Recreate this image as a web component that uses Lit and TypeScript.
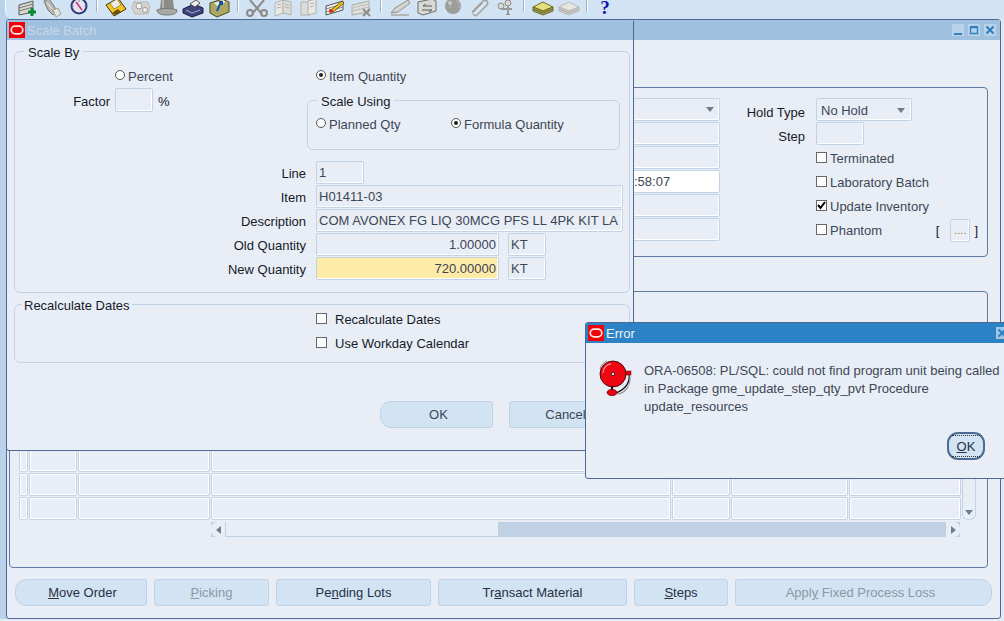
import { LitElement, html, svg, css } from "lit";
import { customElement } from "lit/decorators.js";

const oracleLogo = html`<svg class="logo" viewBox="0 0 16 16">
	<rect width="16" height="16" fill="#f40009" />
	<rect x="2.2" y="4.2" width="11.6" height="7.6" rx="3.8" fill="none" stroke="#fff" stroke-width="1.7" opacity="0.9" />
</svg>`;

// toolbar glyphs, all drawn in a 26x20 box and cut off by the top of the page
const icons: Record<string, unknown> = {
	add: svg`<path d="M5 5l14-4v11L5 15z" fill="#d8d8d0" stroke="#5a5a55" />
		<path d="M5 8l14-4M5 11l14-4" stroke="#77776f" />
		<path d="M14 12h8M18 8v8" stroke="#0a8a30" stroke-width="3" />`,
	lamp: svg`<path d="M4 1l5-2 5 7 3 6-4 3-5-5z" fill="#b9b9b5" stroke="#77776f" />
		<path d="M13 10l5-2 3 6-5 3z" fill="#e4e4de" stroke="#a0a09a" />
		<path d="M7 3l5 6" stroke="#eee" />`,
	compass: svg`<circle cx="13" cy="6" r="7.5" fill="#e4e4ee" stroke="#2f3a78" stroke-width="2" />
		<path d="M10 2l6 8" stroke="#d0307a" stroke-width="1.5" />
		<path d="M13 0v2M20 6h-2M6 6h2" stroke="#8a8aa8" />`,
	save: svg`<path d="M4 5L16 -2l8 11-12 7z" fill="#f4c41e" stroke="#3f3408" />
		<path d="M8 3l7-4 4 6-7 4z" fill="#ecece4" stroke="#6a5a10" stroke-width="0.6" />
		<path d="M10 13l6-4 3 3-6 3z" fill="#6a5208" />`,
	gear: svg`<path d="M6 2h14l2 5-2 7H7l-3-6z" fill="#d4d4d0" stroke="#a8a8a4" stroke-dasharray="2 1" />
		<circle cx="11" cy="6" r="3" fill="#f2f2ee" stroke="#9a9a96" />
		<circle cx="17" cy="10" r="2.5" fill="#f2f2ee" stroke="#9a9a96" />`,
	hat: svg`<path d="M7 0h12l1 9H6z" fill="#8b8b87" />
		<path d="M3 10c4-2 16-2 20 0 0 3-3 5-10 5S3 13 3 10z" fill="#a9a9a5" stroke="#77776f" />
		<path d="M9 0v8" stroke="#b5b5b0" stroke-width="2" />`,
	printer: svg`<path d="M3 9l11-5 9 4v5l-11 4-9-4z" fill="#3d4478" stroke="#1c1f48" />
		<path d="M10 4l6-4 4 3-5 4z" fill="#f0f0f4" stroke="#555" />
		<path d="M6 10l6 3 8-3" stroke="#a7acd6" fill="none" />`,
	folder: svg`<path d="M4 3l12-4 7 3v10l-12 5-7-4z" fill="#aca862" stroke="#4c4a24" />
		<path d="M8 3l9-3 3 2-9 4z" fill="#e6e6d6" />
		<path d="M11 11l4-9M13 2h3v3" stroke="#1450b4" stroke-width="2" fill="none" />`,
	cut: svg`<path d="M6 0l12 14M20 0L8 14" stroke="#8a8a86" stroke-width="2" />
		<circle cx="6" cy="13" r="3" fill="none" stroke="#8a8a86" stroke-width="2" />
		<circle cx="20" cy="13" r="3" fill="none" stroke="#8a8a86" stroke-width="2" />`,
	copy: svg`<path d="M5 3l8-3v13l-8 3z" fill="#e8e8e4" stroke="#b4b4b0" />
		<path d="M13 0l8 2v13l-8-2z" fill="#dcdcd8" stroke="#b4b4b0" />
		<path d="M7 5l4-1M7 8l4-1M15 4l4 1M15 7l4 1" stroke="#b4b4b0" />`,
	paste: svg`<path d="M5 2h9v13H5z" fill="#dcdcd8" stroke="#b0b0ac" />
		<path d="M12 1l8-2v14l-8 2z" fill="#e8e8e4" stroke="#b0b0ac" />
		<path d="M14 4l4-1M14 7l4-1" stroke="#b4b4b0" />`,
	edit: svg`<path d="M4 6l17-5v9L4 15z" fill="#ecece6" stroke="#55554f" />
		<path d="M4 9l17-5M4 12l17-5" stroke="#88887f" />
		<path d="M9 10l11-9 2 2-11 9z" fill="#f2c11d" stroke="#6a5a10" />
		<circle cx="9" cy="11" r="2" fill="#d22" />`,
	clear: svg`<path d="M4 5l17-4v11L4 15z" fill="#dededa" stroke="#aaaaa6" />
		<path d="M4 8l17-4M4 11l17-4" stroke="#bcbcb8" />
		<path d="M15 9l7 7M22 9l-7 7" stroke="#8e8e8a" stroke-width="2" />`,
	pen: svg`<path d="M3 13l4-5L20 0l2 3L10 12z" fill="#d4d4d0" stroke="#8f8f8b" />
		<path d="M3 15h18" stroke="#a8a8a4" stroke-width="1.5" />`,
	translate: svg`<path d="M4 2l14-3 4 2v10L9 15l-5-2z" fill="#d8d8d4" stroke="#6e6e6a" />
		<path d="M9 6h9M9 6l3-2M18 10H8M18 10l-3 2" stroke="#5c5c58" fill="none" />`,
	globe: svg`<circle cx="13" cy="6" r="8" fill="#9c9c98" />
		<path d="M7 1c3 1 4 4 3 7M15 -1c3 3 5 6 4 9" stroke="#b8b8b4" fill="none" />
		<circle cx="10" cy="3" r="2" fill="#c8c8c4" />`,
	clip: svg`<path d="M6 12L17 1c3-2 6 1 4 4L11 15c-2 2-5-1-3-3l9-9" fill="none" stroke="#a4a4a0" stroke-width="1.6" />
		<path d="M7 14L18 3" stroke="#f4f4f4" />`,
	tree: svg`<circle cx="9" cy="6" r="3" fill="#d8d8d4" stroke="#8c8c88" />
		<circle cx="16" cy="3" r="3" fill="#d8d8d4" stroke="#8c8c88" />
		<path d="M9 9h7M16 6v9M12 9h8" stroke="#9a9a96" stroke-width="2" />
		<path d="M14 14h4v1h-4z" fill="#8c8c88" />`,
	stack: svg`<path d="M3 7l10-5 10 5-10 4z" fill="#e6e07c" stroke="#6c6a2c" />
		<path d="M3 7v4l10 4 10-4V7l-10 4z" fill="#a8a24c" stroke="#6c6a2c" />
		<path d="M3 9l10 4 10-4" stroke="#6c6a2c" fill="none" />`,
	stackOff: svg`<path d="M3 7l10-5 10 5-10 4z" fill="#e6e6e2" stroke="#b8b8b4" />
		<path d="M3 7v4l10 4 10-4V7l-10 4z" fill="#cbcbc7" stroke="#b8b8b4" />
		<path d="M3 9l10 4 10-4" stroke="#b0b0ac" fill="none" />`,
};

const toolIcon = (name: string) => html`<svg class="tool" viewBox="0 0 26 20">${icons[name]}</svg>`;

const bell = html`<svg class="bell" viewBox="0 0 36 37">
	<path d="M2 9C3 5 6 2 9 1M30 27c-2 4-6 7-11 7" fill="none" stroke="#8a8a8a" />
	<path d="M29 14h2c1 7-1 14-13 19" fill="none" stroke="#111" stroke-width="1.2" />
	<path d="M32 16c1 6-1 13-11 18" fill="none" stroke="#999" />
	<path d="M14 26v6" stroke="#111" stroke-width="2" />
	<rect x="27" y="11" width="6" height="4" fill="#e8000e" stroke="#700" stroke-width="0.5" />
	<ellipse cx="14" cy="32.5" rx="5" ry="3.2" fill="#e8000e" stroke="#400" stroke-width="0.6" />
	<circle cx="15" cy="14" r="13" fill="#ee0612" stroke="#200" stroke-width="0.8" />
	<path d="M5 13C5 8 9 4 13 4" fill="none" stroke="#ff8a90" stroke-width="1.4" />
	<circle cx="15" cy="14" r="1.6" fill="#fff" stroke="#111" stroke-width="0.8" />
</svg>`;

const arrow = (dir: string) => html`<i class="arrow ${dir}"></i>`;

@customElement("app-root")
export class AppRoot extends LitElement {
	static styles = css`
		:host {
			display: block;
			position: relative;
			width: 1004px;
			height: 621px;
			overflow: hidden;
			background:
				linear-gradient(to top, #e4ecf5 2px, transparent 2px),
				linear-gradient(to right, #b9d1e9 990px, #dfe9f4 990px);
			font: 13px/1 "Liberation Sans", Arial, sans-serif;
			color: #141a28;
		}
		* {
			box-sizing: border-box;
		}

		/* toolbar */
		.toolbar {
			display: flex;
			align-items: flex-start;
			height: 19px;
			margin-left: 5px;
			padding-left: 8px;
			background: #d2e3f3;
			border-left: 1px solid #f4f8fc;
			border-bottom-left-radius: 8px;
		}
		.tool {
			flex: none;
			display: block;
			width: 26px;
			height: 20px;
		}
		.sep {
			flex: none;
			height: 12px;
			border-left: 1px solid #a2b2c4;
			border-right: 1px solid #fff;
			margin: 0 4px;
			width: 2px;
		}
		.sep.wide {
			margin: 0 5px;
		}
		.sep.widest {
			margin: 0 6px;
		}
		.help {
			flex: none;
			width: 26px;
			text-align: center;
			font: bold 19px/15px "Liberation Serif", serif;
			color: #1414b8;
		}

		/* windows sit on a free desktop */
		.window {
			position: absolute;
			background: #e9eef6;
			border: 1px solid #4c6a94;
			border-radius: 3px;
		}
		.main {
			left: 6px;
			top: 19px;
			width: 995px;
			height: 600px;
		}
		.scale {
			left: 6px;
			top: 19px;
			width: 628px;
			height: 432px;
		}
		.error {
			left: 585px;
			top: 322px;
			width: 430px;
			height: 157px;
		}
		.title {
			display: flex;
			align-items: center;
			height: 20px;
			padding-left: 2px;
			background: #9fc0de;
			color: #c6d8ea;
		}
		.error .title {
			background: #2c82c4;
			color: #eef4fa;
		}
		.logo {
			flex: none;
			width: 16px;
			height: 16px;
			margin-right: 2px;
		}
		.controls {
			display: flex;
			gap: 4px;
			margin-left: auto;
			margin-right: 4px;
		}
		.error .controls {
			margin-right: 6px;
		}
		.ctl {
			display: block;
			width: 12px;
			height: 12px;
			background: #b7d3ea;
		}
		.error .ctl {
			background: #9cc7e8;
		}

		/* main window */
		.main-body {
			padding: 0 12px 0 2px;
		}
		.box {
			border: 1px solid #5e7a9f;
			border-radius: 4px;
		}
		.upper {
			margin-top: 47px;
			height: 170px;
			padding: 10px 0 0 615px;
			display: grid;
			grid-template-columns: 95px 96px 165px;
			grid-auto-rows: 24px;
		}
		.f {
			display: flex;
			align-items: center;
			height: 23px;
			padding: 0 2px;
			background: #e9eef6;
			border: 1px solid #c3d3e7;
			border-radius: 2px;
			box-shadow: inset -1px -1px 0 #fff;
			color: #3d4657;
			white-space: nowrap;
		}
		.f.white {
			background: #fff;
			padding-left: 8px;
		}
		.f.select {
			justify-content: space-between;
			padding: 1px 6px 0 4px;
			width: 96px;
		}
		.col-fld {
			justify-content: flex-end;
			padding-right: 5px;
		}
		.step {
			width: 48px;
		}
		.lbl {
			display: flex;
			align-items: center;
			justify-content: flex-end;
			height: 24px;
			padding-top: 1px;
			white-space: nowrap;
		}
		.upper .lbl {
			padding: 4px 11px 0 0;
		}
		.chk {
			display: flex;
			align-items: center;
			gap: 3px;
			height: 24px;
			color: #3d4657;
			white-space: nowrap;
		}
		.box-c {
			flex: none;
			width: 11px;
			height: 11px;
			background: #fff;
			border: 1px solid #666;
			margin-top: -2px;
			display: block;
		}
		.box-c svg {
			display: block;
		}
		.brackets {
			display: flex;
			align-items: center;
			margin-left: auto;
			margin-right: 3px;
			color: #141a28;
		}
		.brackets .f {
			width: 20px;
			margin: 0 4px 0 11px;
			padding: 0;
			justify-content: center;
			color: #a8782a;
			font-size: 11px;
		}
		.arrow {
			display: block;
			width: 0;
			height: 0;
			border: 4px solid transparent;
		}
		.arrow.down {
			border-top: 5px solid #6f7c92;
			border-bottom: 0;
		}
		.arrow.left {
			border-right: 5px solid #6f7c92;
			border-left: 0;
		}
		.arrow.right {
			border-left: 5px solid #6f7c92;
			border-right: 0;
		}

		.lower {
			margin-top: 34px;
			height: 277px;
			padding: 157px 0 0 9px;
		}
		.table {
			display: grid;
			grid-template-columns: 9px 48px 132px 460px 58px 117px 112px 14px;
			column-gap: 1px;
			grid-auto-rows: 23px;
			row-gap: 1px;
		}
		.cell {
			background: #e9eef6;
			border: 1px solid #c3d3e7;
			border-radius: 2px;
			box-shadow: inset -1px -1px 0 #fff, inset 1px 1px 0 #fff;
		}
		.vbar {
			grid-column: 8;
			grid-row: 1 / span 3;
			display: flex;
			flex-direction: column;
			justify-content: flex-end;
			align-items: center;
			padding-bottom: 4px;
			border: 1px solid #c3d3e7;
			border-top: 0;
			border-radius: 0 0 6px 6px;
			background: #e9eef6;
		}
		.hbar {
			display: flex;
			height: 15px;
			margin: 2px 0 0 192px;
			width: 749px;
			background: #c0d1e6;
		}
		.hbar .end {
			flex: none;
			width: 14px;
			display: flex;
			align-items: center;
			justify-content: center;
			background: #e9eef6;
			border-radius: 6px 0 0 6px;
		}
		.hbar .end.r {
			border-radius: 0 6px 6px 0;
		}
		.hbar .thumb {
			flex: none;
			width: 272px;
			margin: 0 0 1px 1px;
			background: #e9eef6;
		}
		.hbar .gap {
			flex: 1;
		}

		.actions {
			display: flex;
			gap: 7px;
			margin: 11px 0 0 6px;
		}
		.btn {
			display: flex;
			align-items: center;
			justify-content: center;
			flex: none;
			height: 27px;
			background: #d2e3f3;
			border: 1px solid #bfd2e7;
			border-radius: 3px;
			color: #283044;
			white-space: nowrap;
		}
		.btn.off {
			color: #8d97a5;
		}
		.btn.round-l {
			border-radius: 11px 3px 3px 11px;
		}
		.btn.round-r {
			border-radius: 3px 11px 11px 3px;
		}
		.w-move { width: 132px; padding-left: 3px; }
		.w-pick { width: 115px; }
		.w-pend { width: 155px; }
		.w-tran { width: 189px; }
		.w-step { width: 94px; }
		.w-appl { width: 257px; padding-right: 6px; }

		/* scale batch window */
		.scale-body {
			padding: 11px 3px 0 7px;
		}
		.group {
			position: relative;
			border: 1px solid #c3d3e7;
			border-radius: 6px;
		}
		.legend {
			position: absolute;
			top: -6px;
			background: #e9eef6;
			padding: 0 4px 1px 4px;
			line-height: 14px;
		}
		.scale-by {
			width: 616px;
			height: 242px;
			padding-top: 14px;
		}
		.scale-by > .legend {
			left: 9px;
		}
		.top {
			display: grid;
			grid-template-columns: 292px 313px;
			grid-template-rows: 20px 64px;
		}
		.opt {
			display: flex;
			align-items: center;
			gap: 3px;
			color: #3d4657;
			white-space: nowrap;
		}
		.opt.percent {
			padding-left: 100px;
		}
		.opt.item {
			padding-left: 9px;
		}
		.radio {
			flex: none;
			width: 10px;
			height: 10px;
			margin-top: -2px;
			border-radius: 50%;
			border: 1px solid #555;
			background: #fff;
			position: relative;
		}
		.radio.on::after {
			content: "";
			position: absolute;
			inset: 2px;
			border-radius: 50%;
			background: #222;
		}
		.factor {
			display: flex;
			align-items: center;
			height: 24px;
			margin-top: 2px;
		}
		.factor .lbl {
			width: 95px;
			padding-top: 2px;
		}
		.factor .f {
			width: 38px;
			margin: 0 5px;
			height: 24px;
		}
		.factor .pct {
			padding-top: 2px;
		}
		.using {
			margin-top: 14px;
			height: 50px;
			padding-top: 14px;
		}
		.using .legend {
			left: 9px;
		}
		.using-row {
			display: flex;
			padding-left: 8px;
			height: 18px;
		}
		.using-row .opt:first-child {
			width: 135px;
		}
		.rows {
			display: grid;
			grid-template-columns: 291px 1fr;
			grid-auto-rows: 24px;
			column-gap: 10px;
			margin-top: 11px;
		}
		.line { width: 48px; }
		.wide-f { width: 307px; }
		.qty {
			display: flex;
			gap: 9px;
		}
		.qty .f:first-child {
			width: 183px;
			justify-content: flex-end;
		}
		.qty .f:last-child {
			width: 38px;
		}
		.f.hot {
			background: #ffeba8;
		}
		.recalc {
			width: 616px;
			height: 59px;
			margin-top: 11px;
			padding: 2px 0 0 301px;
		}
		.recalc .legend {
			left: 7px;
			padding: 0 2px;
		}
		.recalc .chk {
			gap: 8px;
			color: #141a28;
		}
		.dlg-btns {
			display: flex;
			gap: 16px;
			margin: 38px 0 0 366px;
		}
		.dlg-btns .btn {
			width: 113px;
			color: #3d4657;
		}
		.dlg-btns .btn:first-child {
			padding-left: 4px;
		}

		/* error window */
		.err-body {
			display: flex;
			padding: 19px 0 0 12px;
		}
		.bell {
			flex: none;
			width: 36px;
			height: 37px;
			margin: -2px 10px 0 0;
		}
		.msg {
			line-height: 18px;
			color: #3d4657;
			white-space: nowrap;
		}
		.ack {
			display: flex;
			align-items: center;
			justify-content: center;
			width: 38px;
			height: 28px;
			margin: 16px 0 0 303px;
			background: #d2e3f3;
			border: 2px solid #4c6a94;
			border-radius: 11px;
			color: #283044;
			position: relative;
		}
		.ack::before {
			content: "";
			position: absolute;
			inset: 1px 3px;
			border-top: 1px dotted #333;
			border-bottom: 1px dotted #333;
		}
	`;

	render() {
		return html`
			<div class="toolbar">
				${toolIcon("add")}${toolIcon("lamp")}${toolIcon("compass")}
				<i class="sep"></i>
				${toolIcon("save")}${toolIcon("gear")}${toolIcon("hat")}${toolIcon("printer")}${toolIcon("folder")}
				<i class="sep wide"></i>
				${toolIcon("cut")}${toolIcon("copy")}${toolIcon("paste")}${toolIcon("edit")}${toolIcon("clear")}
				<i class="sep widest"></i>
				${toolIcon("pen")}${toolIcon("translate")}${toolIcon("globe")}${toolIcon("clip")}${toolIcon("tree")}
				<i class="sep wide"></i>
				${toolIcon("stack")}${toolIcon("stackOff")}
				<i class="sep"></i>
				<span class="help">?</span>
			</div>
			${this.renderMain()} ${this.renderScale()} ${this.renderError()}
		`;
	}

	renderControls(all: boolean) {
		return html`<div class="controls">
			${all
				? html`<svg class="ctl" viewBox="0 0 12 12"><path d="M2 10h8" stroke="#2f7fc1" stroke-width="2" /></svg>
						<svg class="ctl" viewBox="0 0 12 12"><path d="M2.5 3.5h7v6h-7z" fill="none" stroke="#2f7fc1" stroke-width="1.4" /><path d="M2 3h8" stroke="#2f7fc1" stroke-width="2" /></svg>`
				: ""}
			<svg class="ctl" viewBox="0 0 12 12"><path d="M2.5 2.5l7 7M9.5 2.5l-7 7" stroke="#2f7fc1" stroke-width="2" /></svg>
		</div>`;
	}

	renderMain() {
		const rows = [0, 1, 2];
		return html`
			<section class="window main">
				<div class="title">${this.renderControls(true)}</div>
				<div class="main-body">
					<div class="box upper">
						<div class="f col-fld">${arrow("down")}</div>
						<div class="lbl">Hold Type</div>
						<div class="f select">No Hold ${arrow("down")}</div>

						<div class="f"></div>
						<div class="lbl">Step</div>
						<div class="f step"></div>

						<div class="f"></div>
						<div></div>
						<label class="chk"><i class="box-c"></i>Terminated</label>

						<div class="f white">:58:07</div>
						<div></div>
						<label class="chk"><i class="box-c"></i>Laboratory Batch</label>

						<div class="f"></div>
						<div></div>
						<label class="chk">
							<i class="box-c"><svg viewBox="0 0 9 9"><path d="M1 4l2.5 3L8 1" fill="none" stroke="#000" stroke-width="2" /></svg></i>
							Update Inventory
						</label>

						<div class="f"></div>
						<div></div>
						<div class="chk">
							<i class="box-c"></i>Phantom
							<span class="brackets">[<span class="f">....</span>]</span>
						</div>
					</div>

					<div class="box lower">
						<div class="table">
							${rows.map(
								() => html`
									<div class="cell"></div>
									<div class="cell"></div>
									<div class="cell"></div>
									<div class="cell"></div>
									<div class="cell"></div>
									<div class="cell"></div>
									<div class="cell"></div>
								`,
							)}
							<div class="vbar">${arrow("down")}</div>
						</div>
						<div class="hbar">
							<span class="end">${arrow("left")}</span>
							<span class="thumb"></span>
							<span class="gap"></span>
							<span class="end r">${arrow("right")}</span>
						</div>
					</div>

					<div class="actions">
						<div class="btn round-l w-move"><span><u>M</u>ove Order</span></div>
						<div class="btn off w-pick"><span><u>P</u>icking</span></div>
						<div class="btn w-pend"><span>Pe<u>n</u>ding Lots</span></div>
						<div class="btn w-tran"><span>Tr<u>a</u>nsact Material</span></div>
						<div class="btn w-step"><span><u>S</u>teps</span></div>
						<div class="btn off round-r w-appl"><span>Appl<u>y</u> Fixed Process Loss</span></div>
					</div>
				</div>
			</section>
		`;
	}

	renderScale() {
		return html`
			<section class="window scale">
				<div class="title">${oracleLogo}Scale Batch</div>
				<div class="scale-body">
					<div class="group scale-by">
						<span class="legend">Scale By</span>
						<div class="top">
							<div class="opt percent"><i class="radio"></i>Percent</div>
							<div class="opt item"><i class="radio on"></i>Item Quantity</div>
							<div class="factor">
								<span class="lbl">Factor</span>
								<span class="f"></span>
								<span class="pct">%</span>
							</div>
							<div class="group using">
								<span class="legend">Scale Using</span>
								<div class="using-row">
									<div class="opt"><i class="radio"></i>Planned Qty</div>
									<div class="opt"><i class="radio on"></i>Formula Quantity</div>
								</div>
							</div>
						</div>
						<div class="rows">
							<div class="lbl">Line</div>
							<div class="f line">1</div>
							<div class="lbl">Item</div>
							<div class="f wide-f">H01411-03</div>
							<div class="lbl">Description</div>
							<div class="f wide-f">COM AVONEX FG LIQ 30MCG PFS LL 4PK KIT LA</div>
							<div class="lbl">Old Quantity</div>
							<div class="qty"><div class="f">1.00000</div><div class="f">KT</div></div>
							<div class="lbl">New Quantity</div>
							<div class="qty"><div class="f hot">720.00000</div><div class="f">KT</div></div>
						</div>
					</div>
					<div class="group recalc">
						<span class="legend">Recalculate Dates</span>
						<label class="chk"><i class="box-c"></i>Recalculate Dates</label>
						<label class="chk"><i class="box-c"></i>Use Workday Calendar</label>
					</div>
					<div class="dlg-btns">
						<div class="btn round-l">OK</div>
						<div class="btn">Cancel</div>
					</div>
				</div>
			</section>
		`;
	}

	renderError() {
		return html`
			<section class="window error">
				<div class="title">${oracleLogo}Error ${this.renderControls(false)}</div>
				<div class="err-body">
					${bell}
					<div>
						<div class="msg">
							ORA-06508: PL/SQL: could not find program unit being called<br />
							in Package gme_update_step_qty_pvt Procedure<br />
							update_resources
						</div>
						<div class="ack"><span><u>O</u>K</span></div>
					</div>
				</div>
			</section>
		`;
	}
}
